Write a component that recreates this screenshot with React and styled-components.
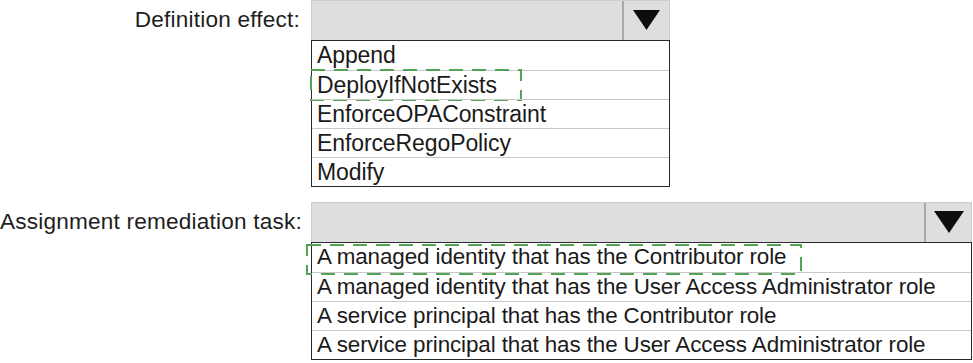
import React from 'react'
import styled, { createGlobalStyle } from 'styled-components'

const GlobalStyle = createGlobalStyle`
  body {
    margin: 0;
    background: #ffffff;
    font-family: "Liberation Sans", Arial, sans-serif;
  }
`

const fields = [
  {
    label: 'Definition effect:',
    width: 359,
    size: 23,
    arrow: { w: 27, h: 20 },
    options: ['Append', 'DeployIfNotExists', 'EnforceOPAConstraint', 'EnforceRegoPolicy', 'Modify'],
    pick: 1,
    mark: { left: -2, top: -2, width: 212, height: 32 }
  },
  {
    label: 'Assignment remediation task:',
    width: 661,
    size: 22.4,
    arrow: { w: 30, h: 22 },
    options: [
      'A managed identity that has the Contributor role',
      'A managed identity that has the User Access Administrator role',
      'A service principal that has the Contributor role',
      'A service principal that has the User Access Administrator role'
    ],
    pick: 0,
    mark: { left: -6, top: 1, width: 496, height: 31 }
  }
]

const DashedMark = ({ mark }) => (
  <Mark style={{ left: mark.left, top: mark.top, width: mark.width, height: mark.height }}>
    <svg width={mark.width} height={mark.height}>
      <rect
        x="1"
        y="1"
        width={mark.width - 2}
        height={mark.height - 2}
        fill="none"
        stroke="#52a552"
        strokeWidth="2"
        strokeDasharray="14 9"
      />
    </svg>
  </Mark>
)

const Field = ({ field }) => (
  <FieldRow>
    <Label>{field.label}</Label>
    <Dropdown $width={field.width}>
      <Header>
        <HeaderValue />
        <ArrowBox>
          <svg width={field.arrow.w} height={field.arrow.h} viewBox="0 0 30 22">
            <polygon points="0,0 30,0 15,22" fill="#0d0d0d" />
          </svg>
        </ArrowBox>
      </Header>
      <OptionList>
        {field.options.map((option, i) => (
          <Option key={option} $size={field.size}>
            {option}
            {i === field.pick && <DashedMark mark={field.mark} />}
          </Option>
        ))}
      </OptionList>
    </Dropdown>
  </FieldRow>
)

const App = () => (
  <>
    <GlobalStyle />
    <Page>
      {fields.map((field) => (
        <Field key={field.label} field={field} />
      ))}
    </Page>
  </>
)

export default App

const Page = styled.main`
  display: flex;
  flex-direction: column;
  gap: 15px;
`

const FieldRow = styled.section`
  display: flex;
  align-items: flex-start;
  gap: 11px;
`

const Label = styled.div`
  width: 300px;
  height: 40px;
  line-height: 40px;
  text-align: right;
  font-size: 22.6px;
  letter-spacing: 0.2px;
  color: #1e1e1e;
  white-space: nowrap;
`

const Dropdown = styled.div`
  width: ${(p) => p.$width}px;
  display: flex;
  flex-direction: column;
`

const Header = styled.div`
  height: 40px;
  box-sizing: border-box;
  display: flex;
  background: #dedede;
  border: 1px solid #cdcdcd;
  border-bottom: none;
`

const HeaderValue = styled.div`
  flex: 1;
`

const ArrowBox = styled.div`
  width: 45px;
  border-left: 2px solid #a9a9a9;
  display: flex;
  align-items: center;
  justify-content: center;
  padding-bottom: 1px;
`

const OptionList = styled.ul`
  list-style: none;
  margin: 0;
  padding: 0;
  border: 1px solid #2a2a2a;
  background: #ffffff;
`

const Option = styled.li`
  position: relative;
  height: 29px;
  box-sizing: border-box;
  padding-left: 5px;
  line-height: 28px;
  font-size: ${(p) => p.$size}px;
  letter-spacing: -0.1px;
  color: #1a1a1a;
  white-space: nowrap;

  & + & {
    border-top: 1px solid #c9c9c9;
  }
`

const Mark = styled.span`
  position: absolute;
  pointer-events: none;

  svg {
    display: block;
  }
`
